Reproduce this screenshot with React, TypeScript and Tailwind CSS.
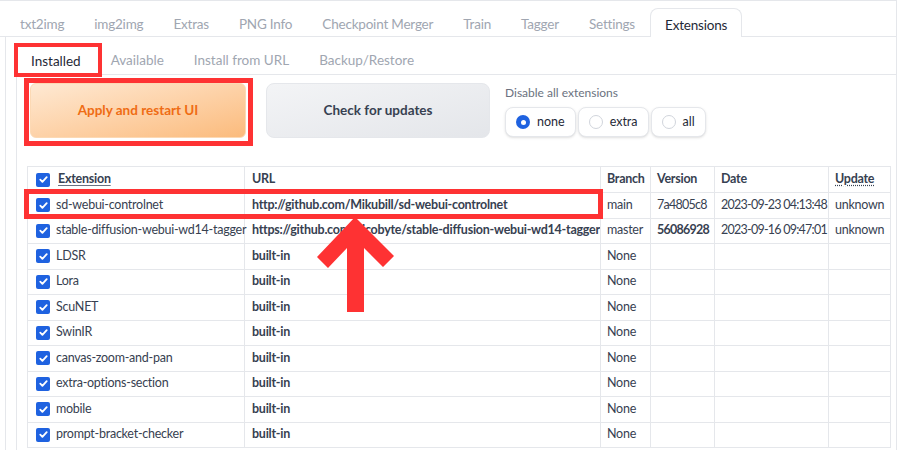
import React from 'react';

const mainTabs = ['txt2img', 'img2img', 'Extras', 'PNG Info', 'Checkpoint Merger', 'Train', 'Tagger', 'Settings'];
const subTabs = ['Available', 'Install from URL', 'Backup/Restore'];

interface ExtRow {
  name: string;
  url: string;
  branch: string;
  version?: string;
  date?: string;
  update?: string;
}

const rows: ExtRow[] = [
  { name: 'sd-webui-controlnet', url: 'http://github.com/Mikubill/sd-webui-controlnet', branch: 'main', version: '7a4805c8', date: '2023-09-23 04:13:48', update: 'unknown' },
  { name: 'stable-diffusion-webui-wd14-tagger', url: 'https://github.com/picobyte/stable-diffusion-webui-wd14-tagger', branch: 'master', version: '56086928', date: '2023-09-16 09:47:01', update: 'unknown' },
  { name: 'LDSR', url: 'built-in', branch: 'None' },
  { name: 'Lora', url: 'built-in', branch: 'None' },
  { name: 'ScuNET', url: 'built-in', branch: 'None' },
  { name: 'SwinIR', url: 'built-in', branch: 'None' },
  { name: 'canvas-zoom-and-pan', url: 'built-in', branch: 'None' },
  { name: 'extra-options-section', url: 'built-in', branch: 'None' },
  { name: 'mobile', url: 'built-in', branch: 'None' },
  { name: 'prompt-bracket-checker', url: 'built-in', branch: 'None' },
];

function Check() {
  return (
    <span className="w-[14px] h-[14px] rounded-[2px] bg-[#1f62e0] flex items-center justify-center shrink-0">
      <svg viewBox="0 0 12 12" className="w-[11px] h-[11px]" fill="none" stroke="white" strokeWidth={2} strokeLinecap="round" strokeLinejoin="round">
        <path d="M2.5 6.2l2.3 2.3 4.7-5" />
      </svg>
    </span>
  );
}

export default function App() {
  return (
    <div className="relative w-[897px] h-[450px] overflow-hidden bg-white border-t border-r border-gray-200 font-['Lato','Noto_Sans',sans-serif] text-[#374151]">
      {/* main tabs */}
      <div className="flex items-end h-[36px] border-b border-gray-200 pl-[5px] text-[13.5px] tracking-[-0.2px]">
        {mainTabs.map((t) => (
          <div key={t} className="h-[28px] px-[15px] pt-[4px] flex items-center text-[#a0a6b1]">{t}</div>
        ))}
        <div className="h-[29px] px-[14px] pt-[4px] mb-[-1px] flex items-center bg-white border border-b-0 border-gray-200 rounded-t-lg text-[#1f2937]">Extensions</div>
      </div>

      <div className="ml-[5px] border-l border-gray-200 h-full">
        {/* sub tabs */}
        <div className="flex items-end h-[38px] ml-[10px] border-b border-gray-200 text-[13.5px]">
          <div className="h-[29px] px-[15px] pt-[2px] mb-[-1px] flex items-center bg-white text-[#1f2937]">Installed</div>
          {subTabs.map((t) => (
            <div key={t} className="h-[28px] px-[15px] pt-[1px] flex items-center text-[#a0a6b1]">{t}</div>
          ))}
        </div>

        <div className="ml-[10px] border-l border-gray-200 h-full pl-[10px] pt-[8px]">
          <div className="flex items-start pl-[3px]">
            <button className="w-[216px] h-[55px] rounded-md border border-[#fcd9b4] bg-gradient-to-br from-[#fee9d3] to-[#fbbb7c] text-[#ef6c14] font-bold text-[13.5px]">
              Apply and restart UI
            </button>
            <button className="ml-[20px] w-[224px] h-[55px] rounded-lg border border-gray-200 bg-gradient-to-br from-[#f3f4f6] to-[#e4e6ea] text-[#374151] font-bold text-[13.5px]">
              Check for updates
            </button>
            <div className="ml-[15px] flex flex-col">
              <div className="text-[12px] text-[#6b7280] leading-[18px] mt-[1px]">Disable all extensions</div>
              <div className="flex gap-[2px] mt-[5px]">
                {['none', 'extra', 'all'].map((r) => (
                  <div key={r} className="h-[30px] flex items-center gap-[7px] px-[10px] border border-gray-200 rounded-lg bg-white shadow-sm text-[12.5px] text-[#1f2937]">
                    {r === 'none' ? (
                      <span className="w-[14px] h-[14px] rounded-full bg-[#1f62e0] flex items-center justify-center">
                        <span className="w-[5px] h-[5px] rounded-full bg-white" />
                      </span>
                    ) : (
                      <span className="w-[14px] h-[14px] rounded-full border border-gray-300 bg-white" />
                    )}
                    {r}
                  </div>
                ))}
              </div>
            </div>
          </div>

          <table className="mt-[28px] w-[863px] table-fixed border-collapse border border-[#dcdfe4] text-[12.5px] tracking-[-0.25px] text-[#374151]">
            <colgroup>
              <col className="w-[217px]" />
              <col className="w-[356px]" />
              <col className="w-[50px]" />
              <col className="w-[64px]" />
              <col className="w-[114px]" />
              <col className="w-[62px]" />
            </colgroup>
            <thead>
              <tr className="h-[26px] font-bold text-left">
                <th className="border border-[#e5e7eb] px-[7px] pl-[8px] font-bold">
                  <div className="flex items-center gap-[8px]">
                    <Check />
                    <span className="underline underline-offset-2 decoration-gray-500">Extension</span>
                  </div>
                </th>
                <th className="border border-[#e5e7eb] px-[7px] font-bold">URL</th>
                <th className="border border-[#e5e7eb] px-[6px] font-bold">Branch</th>
                <th className="border border-[#e5e7eb] px-[6px] font-bold">Version</th>
                <th className="border border-[#e5e7eb] px-[6px] font-bold">Date</th>
                <th className="border border-[#e5e7eb] px-[6px] font-bold">
                  <span className="underline decoration-dotted underline-offset-2">Update</span>
                </th>
              </tr>
            </thead>
            <tbody>
              {rows.map((r) => (
                <tr key={r.name} className="h-[25.5px]">
                  <td className="border border-[#e5e7eb] pl-[8px] pr-[2px] whitespace-nowrap">
                    <div className="flex items-center gap-[6px]">
                      <Check />
                      <span>{r.name}</span>
                    </div>
                  </td>
                  <td className="border border-[#e5e7eb] px-[7px] font-bold whitespace-nowrap overflow-hidden">{r.url}</td>
                  <td className="border border-[#e5e7eb] px-[6px]">{r.branch}</td>
                  <td className={`border border-[#e5e7eb] px-[6px] tracking-[-0.75px] ${r.version === '56086928' ? 'font-bold' : ''}`}>{r.version}</td>
                  <td className="border border-[#e5e7eb] px-[6px] whitespace-nowrap tracking-[-0.75px]">{r.date}</td>
                  <td className="border border-[#e5e7eb] px-[6px]">{r.update}</td>
                </tr>
              ))}
            </tbody>
          </table>
        </div>
      </div>

      {/* annotation overlays */}
      <div className="absolute left-[14px] top-[42px] w-[88px] h-[34px] border-[4px] border-[#fe3233]" />
      <div className="absolute left-[24px] top-[77px] w-[229px] h-[68px] border-[5px] border-[#fe3233]" />
      <div className="absolute left-[24px] top-[188px] w-[579px] h-[30px] border-[5px] border-[#fe3233]" />
      <svg className="absolute left-0 top-0" width="897" height="450" viewBox="0 0 897 450">
        <polygon
          fill="#fe3233"
          points="355,216 394,255 383,266 364,247 364,311 347,311 347,247 328,267 317,256"
        />
      </svg>
    </div>
  );
}
